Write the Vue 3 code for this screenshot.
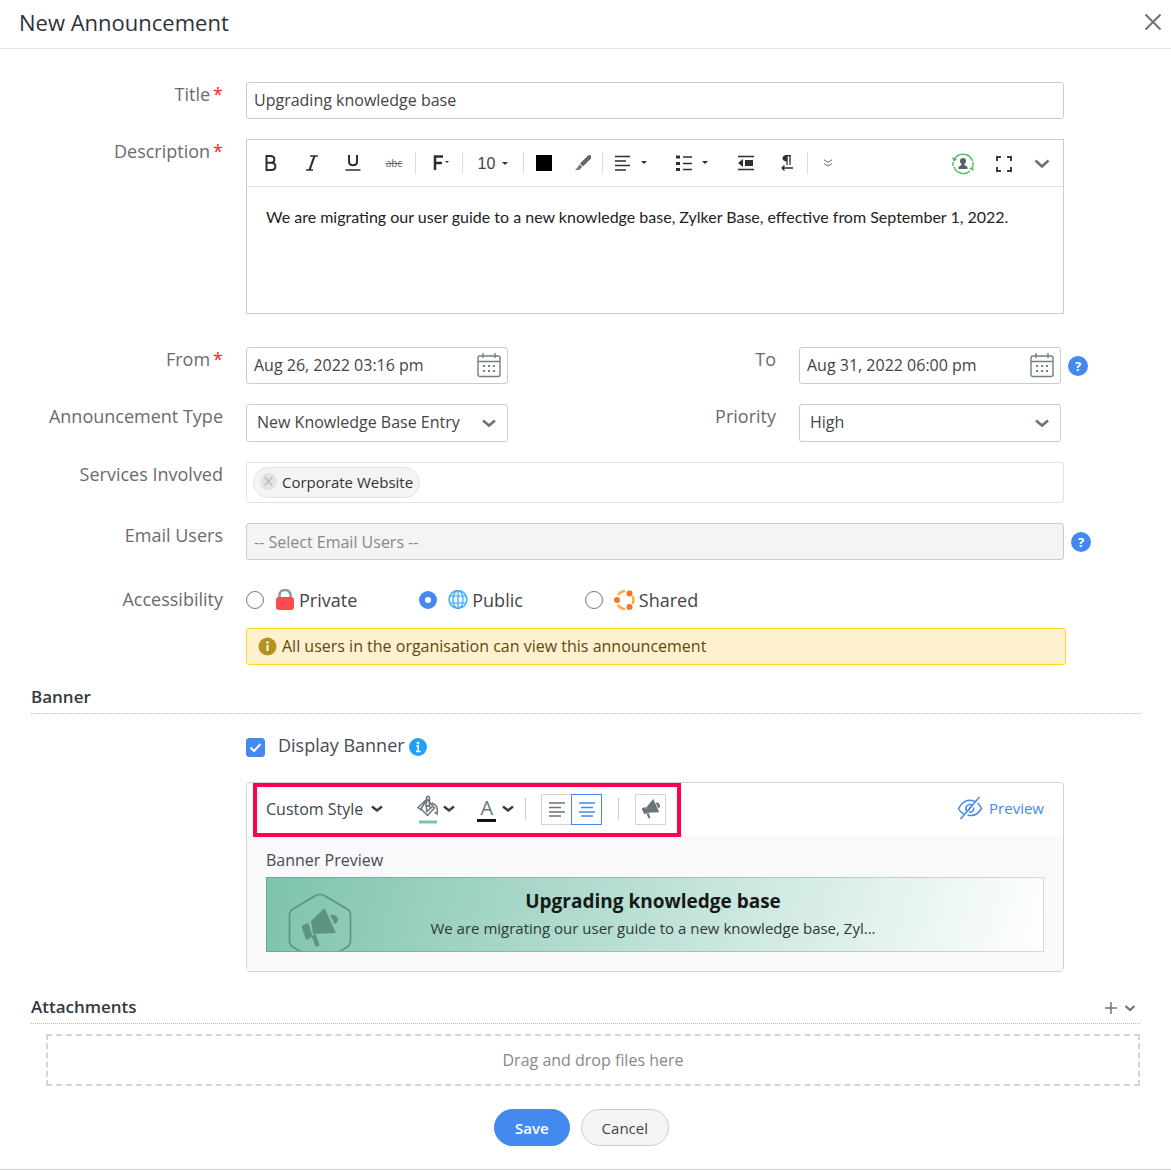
<script setup>
import { ref } from 'vue'

const title = ref('Upgrading knowledge base')
const from = ref('Aug 26, 2022 03:16 pm')
const to = ref('Aug 31, 2022 06:00 pm')
const type = ref('New Knowledge Base Entry')
const priority = ref('High')
const access = ref('public')
const displayBanner = ref(true)
const calendarDots = [[7, 13], [12, 13], [17, 13], [7, 18], [12, 18], [17, 18]]
</script>

<template>
  <main class="dialog">
    <header class="head">
      <h1>New Announcement</h1>
      <button type="button" class="bare" aria-label="Close">
        <svg width="18" height="18" viewBox="0 0 18 18"><path d="M1.500 1.500l15 15M16.500 1.500l-15 15" fill="none" stroke="#6a747b" stroke-width="2" /></svg>
      </button>
    </header>

    <form class="form" @submit.prevent>
      <div class="row">
        <label class="label" for="title">Title<b>*</b></label>
        <input id="title" v-model="title" class="box field" type="text">
      </div>

      <div class="row">
        <span class="label">Description<b>*</b></span>
        <div class="editor field">
          <div class="tools">
            <button type="button" class="w41" aria-label="Bold"><svg width="14" height="18" viewBox="0 0 14 18"><path d="M2.500 2v14h4.500c6 0 5.500-7 .5-7.200C11.500 8 11.500 2 6.500 2zM2.500 8.800h5" fill="none" stroke="#2b2f33" stroke-width="2" /></svg></button>
            <button type="button" class="w41" aria-label="Italic"><svg width="14" height="18" viewBox="0 0 14 18"><path d="M5 2h8M1 16h7" stroke="#2b2f33" stroke-width="1.600" /><path d="M9.500 2l-5 14" stroke="#2b2f33" stroke-width="2.200" /></svg></button>
            <button type="button" class="w41" aria-label="Underline"><svg width="16" height="18" viewBox="0 0 16 18"><path d="M4 1v6.500c0 5 8 5 8 0V1" fill="none" stroke="#2b2f33" stroke-width="2" /><path d="M.5 16h15" stroke="#2b2f33" stroke-width="1.500" /></svg></button>
            <button type="button" class="w42 strike">abc</button>
            <i class="sep" />
            <button type="button" class="w46 font" aria-label="Font"><svg width="16" height="18" viewBox="0 0 16 18"><path d="M2 16V2.500h8M2 9h7" fill="none" stroke="#2b2f33" stroke-width="2.500" /><path d="M12 7h4l-2 2z" fill="#2b2f33" /></svg></button>
            <i class="sep" />
            <button type="button" class="w60 size">10<svg width="6" height="4" viewBox="0 0 6 4"><path d="M0 0h6L3 3z" fill="#2b2f33" /></svg></button>
            <i class="sep" />
            <button type="button" class="w40" aria-label="Text color"><span class="swatch" /></button>
            <button type="button" class="w38" aria-label="Highlight"><svg width="16" height="16" viewBox="0 0 16 16"><path d="M13.500 0l2.500.5v3L8 11.500 5 8.500z" fill="#666" /><path d="M4.300 9.200l3 2.800L4 15H0l3-3z" fill="#777" /></svg></button>
            <i class="sep" />
            <button type="button" class="w55" aria-label="Align"><svg width="32" height="16" viewBox="0 0 32 16"><path d="M0 1.500h15M0 6h11M0 10.500h15M0 15h11" stroke="#2b2f33" stroke-width="1.500" /><path d="M26 6h6l-3 3z" fill="#2b2f33" /></svg></button>
            <button type="button" class="w68" aria-label="List"><svg width="32" height="16" viewBox="0 0 32 16"><path d="M0 2h4M0 8.500h4M0 14.500h4" stroke="#2b2f33" stroke-width="3" /><path d="M7 2h9M7 8.500h9M7 14.500h9" stroke="#2b2f33" stroke-width="1.500" /><path d="M26 6h6l-3 3z" fill="#2b2f33" /></svg></button>
            <button type="button" class="w40" aria-label="Outdent"><svg width="16" height="16" viewBox="0 0 16 16"><path d="M0 1.500h16M0 14.500h16" stroke="#2b2f33" stroke-width="1.500" /><path d="M0 8l5-4v8zM7 5h8v6H7z" fill="#2b2f33" /></svg></button>
            <button type="button" class="w41" aria-label="Direction"><svg width="12" height="16" viewBox="0 0 12 16"><path d="M4 .6h6M6 1v9M9 1v9" stroke="#2b2f33" stroke-width="1.300" /><path d="M6 0C0 0 0 6.500 6 6.500z" fill="#2b2f33" /><path d="M12 13H1M3.500 10.500L1 13l2.500 2.500" fill="none" stroke="#2b2f33" stroke-width="1.300" /></svg></button>
            <i class="sep" />
            <button type="button" class="w40" aria-label="More"><svg width="8" height="8" viewBox="0 0 8 8"><path d="M0 .8l4 2.500L8 .8M0 4.500L4 7l4-2.500" fill="none" stroke="#666" /></svg></button>
            <span class="grow" />
            <button type="button" class="w42 low" aria-label="Placeholder"><svg width="22" height="22" viewBox="0 0 22 22"><path d="M2 7a10 10 0 0 1 18.500 1M2 14a10 10 0 0 0 16 4M1 9v4M21 9v5" fill="none" stroke="#4fbd67" stroke-width="1.400" /><path d="M0 4l1.500 4.500L5 6.500zM22 18l-1.500-4.500-3.500 2z" fill="#4fbd67" /><circle cx="11" cy="8" r="3" fill="#596168" /><path d="M9.500 9h3v3l3 2v2h-9v-2l3-2z" fill="#596168" /></svg></button>
            <button type="button" class="w40 low" aria-label="Full screen"><svg width="16" height="16" viewBox="0 0 16 16"><path d="M1 5V1h4M11 1h4v4M15 11v4h-4M5 15H1v-4" fill="none" stroke="#3c4248" stroke-width="2" /></svg></button>
            <button type="button" class="w36 low" aria-label="Collapse"><svg width="16" height="10" viewBox="0 0 16 10"><path d="M1.500 1.500L8 7.500l6.500-6" fill="none" stroke="#69727a" stroke-width="2.600" /></svg></button>
          </div>
          <div class="content" contenteditable="true" role="textbox" aria-label="Description">We are migrating our user guide to a new knowledge base, Zylker Base, effective from September 1, 2022.</div>
        </div>
      </div>

      <div class="row split dates">
        <label class="label" for="from">From<b>*</b></label>
        <div class="overlay">
          <input id="from" v-model="from" class="box" type="text">
          <button type="button" class="bare cal" aria-label="Pick start date"><svg width="24" height="25" viewBox="0 0 24 25"><path d="M3 3h18a2 2 0 0 1 2 2v16.500a2 2 0 0 1-2 2H3a2 2 0 0 1-2-2V5a2 2 0 0 1 2-2zM1 8.500h22M6 0v5M18 0v5" fill="none" stroke="#747f85" stroke-width="1.400" /><rect v-for="d in calendarDots" :key="d.join()" :x="d[0] - 1" :y="d[1] - 1" width="2" height="2" fill="#747f85" /></svg></button>
        </div>
        <label class="label" for="to">To</label>
        <div class="overlay">
          <input id="to" v-model="to" class="box" type="text">
          <button type="button" class="bare cal" aria-label="Pick end date"><svg width="24" height="25" viewBox="0 0 24 25"><path d="M3 3h18a2 2 0 0 1 2 2v16.500a2 2 0 0 1-2 2H3a2 2 0 0 1-2-2V5a2 2 0 0 1 2-2zM1 8.500h22M6 0v5M18 0v5" fill="none" stroke="#747f85" stroke-width="1.400" /><rect v-for="d in calendarDots" :key="d.join()" :x="d[0] - 1" :y="d[1] - 1" width="2" height="2" fill="#747f85" /></svg></button>
        </div>
        <button type="button" class="help">?</button>
      </div>

      <div class="row split">
        <label class="label" for="type">Announcement Type</label>
        <div class="overlay">
          <select id="type" v-model="type" class="box"><option>New Knowledge Base Entry</option></select>
          <svg class="chev" width="14" height="9" viewBox="0 0 14 9"><path d="M1 1.500l6 5 6-5" fill="none" stroke="#69747b" stroke-width="2.600" /></svg>
        </div>
        <label class="label" for="priority">Priority</label>
        <div class="overlay">
          <select id="priority" v-model="priority" class="box"><option>High</option></select>
          <svg class="chev" width="14" height="9" viewBox="0 0 14 9"><path d="M1 1.500l6 5 6-5" fill="none" stroke="#69747b" stroke-width="2.600" /></svg>
        </div>
      </div>

      <div class="row">
        <span class="label">Services Involved</span>
        <div class="chips field">
          <span class="chip">
            <button type="button" class="bare" aria-label="Remove Corporate Website"><svg width="17" height="17" viewBox="0 0 17 17"><circle cx="8.500" cy="8.500" r="8.500" fill="#e3e3e3" /><path d="M4.500 4l8 8.500M12.500 4l-8 8.500" stroke="#bcbcbc" stroke-width="1.300" /></svg></button>
            Corporate Website
          </span>
        </div>
      </div>

      <div class="row">
        <label class="label" for="email">Email Users</label>
        <input id="email" class="box field muted" type="text" placeholder="-- Select Email Users --">
        <button type="button" class="help over">?</button>
      </div>

      <div class="row access">
        <span class="label">Accessibility</span>
        <div class="radios">
          <label class="radio"><input v-model="access" type="radio" name="access" value="private">
            <svg width="20" height="22" viewBox="0 0 20 22"><path d="M4.500 10V6a5.500 5 0 0 1 11 0v4" fill="none" stroke="#999" stroke-width="2.600" /><rect x="1" y="8" width="18" height="13" rx="3" fill="#fb4b4e" /></svg>Private</label>
          <label class="radio"><input v-model="access" type="radio" name="access" value="public">
            <svg width="20" height="20" viewBox="0 0 20 20"><circle cx="10" cy="9.500" r="9" fill="#e9f7ff" stroke="#39a9f6" stroke-width="1.400" /><ellipse cx="10" cy="9.500" rx="5" ry="9" fill="none" stroke="#39a9f6" stroke-width="1.200" /><path d="M10 .5v18M2 6h16M2 13h16" stroke="#39a9f6" stroke-width="1.200" /></svg>Public</label>
          <label class="radio"><input v-model="access" type="radio" name="access" value="shared">
            <svg width="21" height="22" viewBox="0 0 21 22"><path d="M4 6A9 9 0 0 1 11 2M4 16a9 9 0 0 0 7 4M18.500 7a9 9 0 0 1 0 8" fill="none" stroke="#fdab3d" stroke-width="2.400" /><circle cx="3" cy="11" r="3" fill="#f37525" /><circle cx="15.500" cy="4.500" r="3" fill="#f37525" /><circle cx="15.500" cy="18" r="3" fill="#f37525" /></svg>Shared</label>
        </div>
      </div>

      <p class="notice">
        <svg width="19" height="19" viewBox="0 0 19 19"><circle cx="9.500" cy="9.500" r="9" fill="#b3921d" /><circle cx="9.500" cy="5.500" r="1.300" fill="#fff" /><path d="M9.500 8v6" fill="none" stroke="#fff" stroke-width="2" /></svg>
        <span>All users in the organisation can view this announcement</span>
      </p>

      <h2 class="section">Banner</h2>

      <div class="show">
        <input id="display" v-model="displayBanner" type="checkbox">
        <label for="display">Display Banner</label>
        <svg width="18" height="18" viewBox="0 0 18 18"><circle cx="9" cy="9" r="9" fill="#22a0fb" /><circle cx="9" cy="5" r="1.400" fill="#fff" /><path d="M7.200 8h2v5.500M7 13.500h4.500" fill="none" stroke="#fff" stroke-width="1.600" /></svg>
      </div>

      <section class="banner">
        <div class="bar">
          <div class="styles">
            <button type="button" class="bare style">Custom Style
              <svg width="12" height="8" viewBox="0 0 12 8"><path d="M1 1.500l5 4 5-4" fill="none" stroke="#343e45" stroke-width="2.400" /></svg>
            </button>
            <button type="button" class="bare fill" aria-label="Background color">
              <svg width="22" height="29" viewBox="0 0 22 29"><path d="M10 4l7.500 9-7 7.500L4 14zM9.500 9V3c0-2.500 3-2.500 3 0v7.500M10 4L1 12.500l4 3M9 10l5.500 2.500-4.500 4zM15 8c5 2 6 5 5 11l-2.500-2" fill="none" stroke="#69747b" stroke-width="1.500" /><path d="M2 27h18" stroke="#7dc3ae" stroke-width="3" /></svg>
              <svg width="12" height="8" viewBox="0 0 12 8"><path d="M1 1.500l5 4 5-4" fill="none" stroke="#343e45" stroke-width="2.400" /></svg>
            </button>
            <button type="button" class="bare ink">
              <span>A</span>
              <svg width="12" height="8" viewBox="0 0 12 8"><path d="M1 1.500l5 4 5-4" fill="none" stroke="#343e45" stroke-width="2.400" /></svg>
            </button>
            <i class="rule" />
            <button type="button" class="square" aria-label="Align left"><svg width="16" height="15" viewBox="0 0 16 15"><path d="M0 1h16M0 5.500h12M0 10h16M0 14h12" stroke="#69747b" stroke-width="1.500" /></svg></button>
            <button type="button" class="square on" aria-label="Align center"><svg width="16" height="15" viewBox="0 0 16 15"><path d="M0 1h16M2 5.500h12M0 10h16M2 14h12" stroke="#4389f0" stroke-width="1.500" /></svg></button>
            <i class="rule" />
            <button type="button" class="square" aria-label="Announcement icon"><svg width="20" height="20" viewBox="0 0 36 39"><path d="M22.500 0L34 26l-23 1L9 16zM8 16l3.500 10-3 2.500-3.500 1L0 19.500q0-2 2-2.500zM9 29l4-2 4 9q-2 3-4 1zM27 7q6-1 8 4t-3 7z" fill="#69747b" /></svg></button>
          </div>
          <button type="button" class="bare preview">
            <svg width="26" height="24" viewBox="0 0 26 24"><path d="M8.500 18.500C5.500 17.500 3 15.500 1.500 12.500 6 4.500 12 3 18 5.500M20.500 7q2.500 2 4 5.500c-4 6.500-9 8-14 6.500M22.500 1l-19 22" fill="none" stroke="#4389f0" stroke-width="1.500" /><path d="M9.500 15c-2-4 1.500-8 5.500-6M16.500 11.500c1 3-2 5.500-4.500 4.500M14 10.500l-2.500 3.500" fill="none" stroke="#4389f0" stroke-width="1.500" /></svg>
            Preview
          </button>
        </div>
        <div class="stage">
          <p class="caption">Banner Preview</p>
          <div class="card">
            <svg class="emblem" width="64" height="72" viewBox="0 0 64 72"><path d="M27 3q5-3 10 0l22 13q3.500 2 3.500 6v26q0 4-3.500 6L37 67q-5 3-10 0L5 54q-3.500-2-3.500-6V22q0-4 3.500-6z" fill="none" stroke="#5c9381" stroke-width="1.600" /><path d="M36.500 15L48 40l-23 1-2-13zM20.500 30l4 13-3 2.500-3.500 1L14 35q-1-2 1-3zM23.500 43l4-2 4 11q-2 3-4 1zM42 22q6-1 7.500 3t-3 6z" fill="#5c9381" /></svg>
            <div class="copy">
              <strong>Upgrading knowledge base</strong>
              <span>We are migrating our user guide to a new knowledge base, Zyl...</span>
            </div>
          </div>
        </div>
      </section>

      <div class="section files">
        <h2>Attachments</h2>
        <button type="button" class="bare" aria-label="Add attachment"><svg width="31" height="12" viewBox="0 0 31 12"><path d="M0 6h12M6 0v12" stroke="#69747b" stroke-width="1.500" /><path d="M20.500 4l4.500 4 4.500-4" fill="none" stroke="#69747b" stroke-width="2.200" /></svg></button>
      </div>
      <div class="drop">Drag and drop files here</div>

      <footer class="actions">
        <button type="submit" class="save">Save</button>
        <button type="button" class="cancel">Cancel</button>
      </footer>
    </form>
  </main>
</template>

<style>
body { margin: 0; background: #fff; }
</style>

<style scoped>
* { box-sizing: border-box; }
.dialog { font-family: "Open Sans", sans-serif; font-size: 16px; color: #444; border-bottom: 1px solid #ccc; }
button, input, select { font: inherit; color: inherit; margin: 0; }
button { padding: 0; cursor: pointer; }
svg { display: block; flex: none; }
.bare { display: flex; align-items: center; border: 0; background: none; }
.head { display: flex; align-items: center; justify-content: space-between; height: 49px; padding: 0 9px 4px 19px; border-bottom: 1px solid #e4e4e4; }
h1 { margin: 0; font-size: 22px; font-weight: 400; color: #2d3338; }
.form { display: flex; flex-direction: column; padding: 33px 0 23px; }
.row { display: flex; padding-right: 107px; margin-bottom: 20px; position: relative; }
.label { flex: none; width: 223px; margin-right: 23px; font-size: 18px; line-height: 24px; text-align: right; color: #6b6b6b; white-space: nowrap; }
.label b { margin-left: 3px; font-weight: 400; color: #f22; }
.field { flex: 1; min-width: 0; }
.box { height: 37px; width: 100%; padding: 0 7px 2px; border: 1px solid #ccc; border-radius: 3px; background: #fff; outline: 0; }
.editor { height: 175px; border: 1px solid #ccc; }
.tools { display: flex; height: 47px; padding: 0 3px; border-bottom: 1px solid #e0e0e0; }
.tools button { display: flex; flex: none; align-items: center; justify-content: center; border: 0; background: none; }
.w36 { width: 36px; } .w38 { width: 38px; } .w40 { width: 40px; } .w41 { width: 41px; }
.w42 { width: 42px; } .w46 { width: 46px; } .w55 { width: 55px; } .w60 { width: 60px; } .w68 { width: 68px; }
.tools .strike { font-size: 10px; text-decoration: line-through; color: #666; }
.tools .font { padding-left: 4px; }
.tools .size { gap: 7px; padding-top: 2px; font-family: "Liberation Sans", sans-serif; font-size: 16px; }
.tools .low { padding-top: 2px; }
.sep { flex: none; width: 1px; height: 22px; margin-top: 12px; background: #ddd; }
.swatch { width: 16px; height: 16px; background: #000; }
.grow { flex: 1; }
.content { padding: 18px 19px; font-family: Lato, sans-serif; font-size: 16px; line-height: 24px; color: #222; outline: 0; }
.split { display: grid; grid-template-columns: 246px minmax(0, 262fr) minmax(0, 291fr) minmax(0, 262fr) 3px; }
.split .label { width: auto; }
.dates { margin-top: 13px; }
.overlay { display: grid; align-items: center; }
.overlay > * { grid-area: 1 / 1; }
.cal { justify-self: end; margin-right: 7px; }
.overlay select { height: 38px; padding: 0 10px 2px; appearance: none; }
.chev { justify-self: end; margin-right: 12px; pointer-events: none; }
.help { width: 20px; height: 20px; border: 0; border-radius: 50%; background: #4389f0; color: #fff; font-size: 13px; font-weight: 700; line-height: 20px; align-self: center; margin-left: 7px; }
.over { position: absolute; right: 80px; top: 9px; }
.chips { display: flex; height: 41px; padding: 4px 6px; border: 1px solid #e2e2e2; border-radius: 3px; }
.chip { display: flex; align-items: center; gap: 5px; height: 31px; padding: 0 6px 2px; border: 1px solid #e2e2e2; border-radius: 16px; background: #f4f4f4; font-size: 15px; color: #333; }
.muted { background: #f4f4f4; padding-bottom: 0; }
.muted::placeholder { color: #888; opacity: 1; }
.access { margin: 7px 0 15px; }
.radios { display: flex; height: 26px; font-size: 18px; }
.radio { display: flex; align-items: center; gap: 4px; color: #444; }
.radio + .radio { margin-left: 62px; }
.radio input { appearance: none; width: 18px; height: 18px; border: 1px solid #777; border-radius: 50%; margin-right: 7px; background: #fff; }
.radio input:checked { border: 6px solid #4389f0; }
.notice { display: flex; align-items: center; gap: 5px; height: 37px; margin: 0 105px 0 246px; padding: 0 11px; border: 1px solid #fbd91f; border-radius: 3px; background: #fff0cf; color: #5a4a10; }
.notice span { padding-bottom: 2px; }
.section { display: flex; align-items: center; height: 35px; margin: 14px 31px 0; border-bottom: 1px dotted #bbb; font-size: 17px; font-weight: 600; color: #343a40; }
.show { display: flex; align-items: center; height: 26px; margin: 20px 0 22px 246px; font-size: 18px; line-height: 22px; color: #444c54; }
.show label { padding-bottom: 4px; }
.show input { appearance: none; width: 19px; height: 19px; border-radius: 3px; margin: 0 13px 0 0; border: 1px solid #4389f0; background: #fff; }
.show input:checked { background: #4389f0 url("data:image/svg+xml,%3Csvg xmlns='http://www.w3.org/2000/svg' viewBox='0 0 17 17'%3E%3Cpath d='M3.500 8.500l3.500 3.500 6.500-7' fill='none' stroke='white' stroke-width='2'/%3E%3C/svg%3E"); }
.show svg { margin-left: 4px; }
.banner { margin: 0 107px 0 246px; border: 1px solid #d0d2d5; border-radius: 4px; }
.bar { display: flex; justify-content: space-between; height: 53px; padding: 0 19px 0 6px; }
.styles { display: flex; align-items: center; flex: none; width: 428px; height: 54px; padding: 0 9px 2px; border: 4px solid #ff0050; }
.style { gap: 8px; color: #3e464d; }
.fill { margin-left: 34px; gap: 4px; }
.ink { margin-left: 22px; gap: 6px; }
.ink span { width: 19px; height: 26px; border-bottom: 3px solid #111; font-size: 20px; line-height: 24px; color: #69747b; }
.rule { width: 1px; height: 22px; margin: 0 16px; background: #ccc; }
.ink + .rule { margin: 0 15px 0 11px; }
.square { display: flex; flex: none; align-items: center; justify-content: center; width: 31px; height: 31px; border: 1px solid #d2d2d2; background: #fff; }
.on { margin-left: -1px; border-color: #4389f0; }
.preview { gap: 6px; padding-bottom: 4px; color: #4389f0; font-size: 15px; }
.stage { padding: 12px 19px 19px; background: #f9f9fb; }
.caption { margin: 0 0 5px; line-height: 24px; color: #444b52; }
.card { display: flex; justify-content: center; position: relative; height: 75px; overflow: hidden; border: 1px solid rgba(0, 0, 0, .15); background: linear-gradient(105deg, #7dc3ae, #fff) border-box; }
.emblem { position: absolute; left: 21px; top: 15px; }
.copy { display: flex; flex-direction: column; align-items: center; padding: 10px 4px 0 0; font-size: 15px; line-height: 27px; color: #303836; white-space: nowrap; }
.copy strong { font-size: 19px; color: #151a18; }
.files { justify-content: space-between; padding-right: 4px; margin-top: 17px; }
.files h2 { margin: 0; font-size: 17px; font-weight: 600; }
.files .bare { padding-top: 3px; }
.drop { height: 52px; margin: 10px 31px 23px 46px; border: 2px dashed #d5d5d5; line-height: 48px; text-align: center; color: #888; }
.actions { display: flex; justify-content: center; gap: 11px; padding-right: 8px; }
.actions button { height: 37px; border: 1px solid #ccc; border-radius: 19px; background: #f4f4f4; font-size: 15px; padding: 0 20px; }
.actions .save { border-color: #4389f0; background: #4389f0; color: #fff; font-weight: 600; }
</style>
